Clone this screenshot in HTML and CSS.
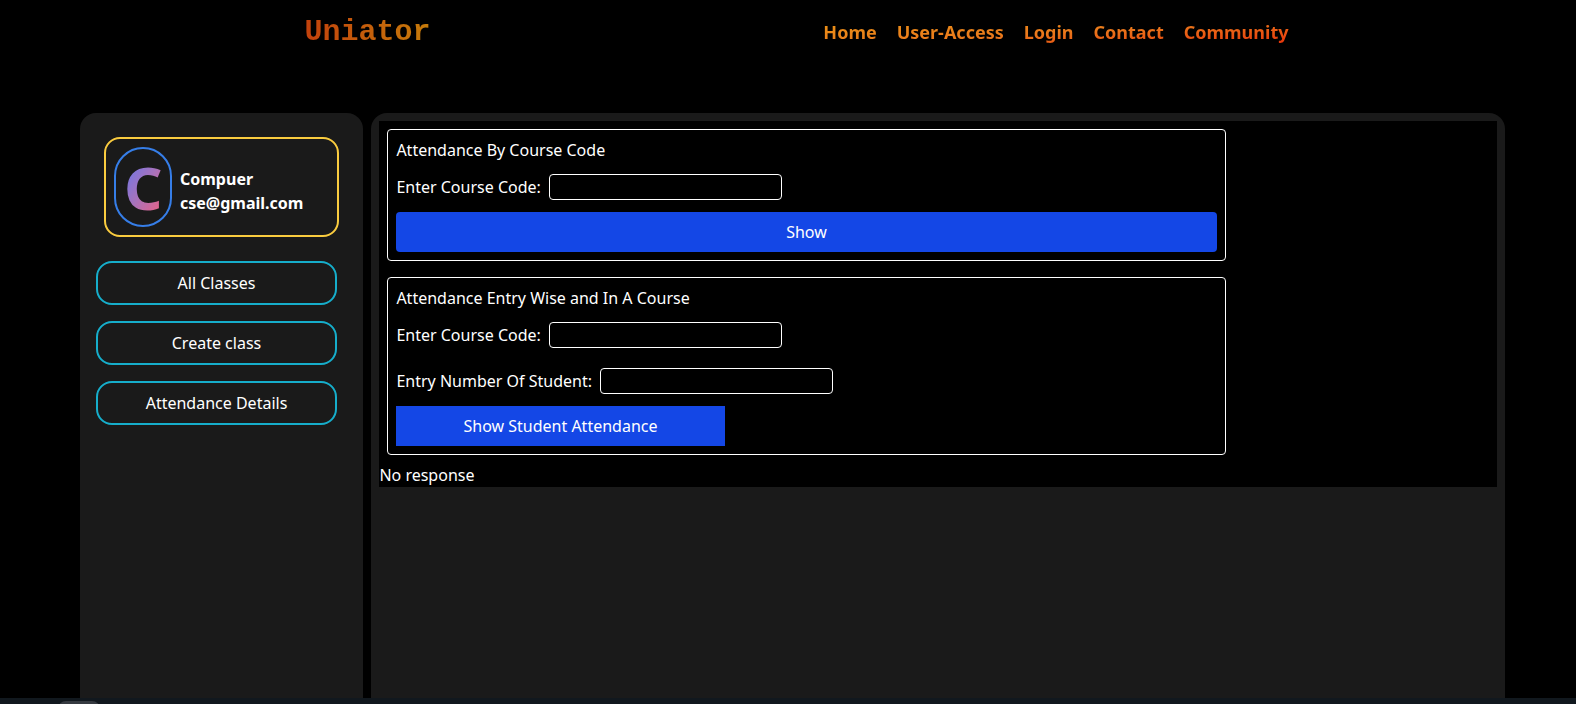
FILE: index.html
```
<!DOCTYPE html>
<html lang="en">
<head>
<meta charset="utf-8">
<title>Uniator</title>
<link rel="stylesheet" href="styles.css">
</head>
<body>
<header class="topbar">
  <div class="brand">Uniator</div>
  <nav class="links"><a>Home</a><a>User-Access</a><a>Login</a><a>Contact</a><a>Community</a></nav>
</header>
<main class="layout">
  <aside class="sidebar">
    <section class="profile">
      <div class="avatar"><span class="initial">C</span></div>
      <div class="identity"><div>Compuer</div><div>cse@gmail.com</div></div>
    </section>
    <div class="menu">
      <button class="menu-item">All Classes</button>
      <button class="menu-item">Create class</button>
      <button class="menu-item">Attendance Details</button>
    </div>
  </aside>
  <section class="content">
    <div class="panel">
      <form class="card">
        <div class="title">Attendance By Course Code</div>
        <div class="field"><label for="c1">Enter Course Code:</label><input id="c1" type="text"></div>
        <button type="button" class="submit">Show</button>
      </form>
      <form class="card">
        <div class="title">Attendance Entry Wise and In A Course</div>
        <div class="field field-spaced"><label for="c2">Enter Course Code:</label><input id="c2" type="text"></div>
        <div class="field"><label for="n2">Entry Number Of Student:</label><input id="n2" type="text"></div>
        <button type="button" class="submit submit-narrow">Show Student Attendance</button>
      </form>
      <div class="response">No response</div>
    </div>
  </section>
</main>
<footer class="dock"><div class="dock-tab"></div></footer>
</body>
</html>
```
FILE: styles.css
```
* { box-sizing: border-box; }
body {
  margin: 0;
  height: 704px;
  overflow: hidden;
  display: flex;
  flex-direction: column;
  background: #000;
  color: #fff;
  font: 16px/24px "Noto Sans", sans-serif;
}
.topbar {
  display: flex;
  justify-content: space-between;
  align-items: center;
  height: 64px;
  margin-bottom: 49px;
  padding: 0 287.5px 0 304.5px;
}
.brand {
  font: bold 30px/36px "Liberation Mono", monospace;
  padding-bottom: 1px;
  background: linear-gradient(to right, #c2410c, #c67c0a);
  background-clip: text;
  -webkit-background-clip: text;
  color: transparent;
}
.links {
  display: flex;
  gap: 20px;
  font-size: 18px;
  line-height: 28px;
  font-weight: 700;
  background: linear-gradient(to bottom right, #eab308 -40%, #ea8a18 22%, #ea7a1c 50%, #e82c08 100%);
  background-clip: text;
  -webkit-background-clip: text;
  color: transparent;
}
.layout {
  flex: 1;
  min-height: 0;
  display: flex;
  gap: 8px;
  padding: 0 71px 0 80px;
}
.sidebar, .content {
  background: #1a1a1a;
  border-radius: 16px 16px 0 0;
}
.sidebar { width: 283px; padding: 24px 24px 0; }
.content { flex: 1; padding: 8px; }
.profile {
  display: flex;
  align-items: center;
  gap: 8px;
  width: 235px;
  height: 100px;
  padding: 8px;
  border: 2px solid #facc3f;
  border-radius: 16px;
}
.avatar {
  width: 58px;
  height: 80px;
  padding: 8px;
  border: 2px solid #367ee8;
  border-radius: 29px;
}
.initial {
  display: block;
  font-size: 60px;
  line-height: 60px;
  font-weight: 700;
  background: linear-gradient(to bottom right, #5f78f0, #a872bc 52%, #f0607e);
  background-clip: text;
  -webkit-background-clip: text;
  color: transparent;
}
.identity { font-weight: 700; padding-top: 8px; }
.menu {
  display: grid;
  gap: 16px;
  margin: 24px 2px 0 -8px;
}
.menu-item {
  height: 44px;
  padding: 0;
  border: 2px solid #16aecb;
  border-radius: 16px;
  background: none;
  color: inherit;
  font: inherit;
}
.panel {
  display: flow-root;
  background: #000;
}
.card {
  width: 839px;
  margin: 8px 8px 16px;
  padding: 8px;
  border: 1px solid #fff;
  border-radius: 4px;
}
.card + .response { margin-top: -8px; padding-left: 0.4px; }
.title { padding-left: 0.4px; }
.field {
  display: flex;
  align-items: center;
  gap: 8px;
  margin: 12px 0;
  padding-left: 0.4px;
}
.field-spaced { margin-bottom: 20px; }
.field input {
  width: 233px;
  height: 26px;
  border: 1px solid #fff;
  border-radius: 4px;
  background: #000;
  color: #fff;
  font: inherit;
}
.submit {
  display: block;
  width: 100%;
  height: 40px;
  border: 0;
  border-radius: 4px;
  background: #1447e6;
  color: #fff;
  font: inherit;
}
.submit-narrow { width: 329px; border-radius: 0; }
.dock {
  height: 6px;
  overflow: hidden;
  padding: 3px 0 0 58px;
  background: #11181e;
}
.dock-tab {
  width: 42px;
  height: 16px;
  border-radius: 9px;
  background: #353a40;
}
```
